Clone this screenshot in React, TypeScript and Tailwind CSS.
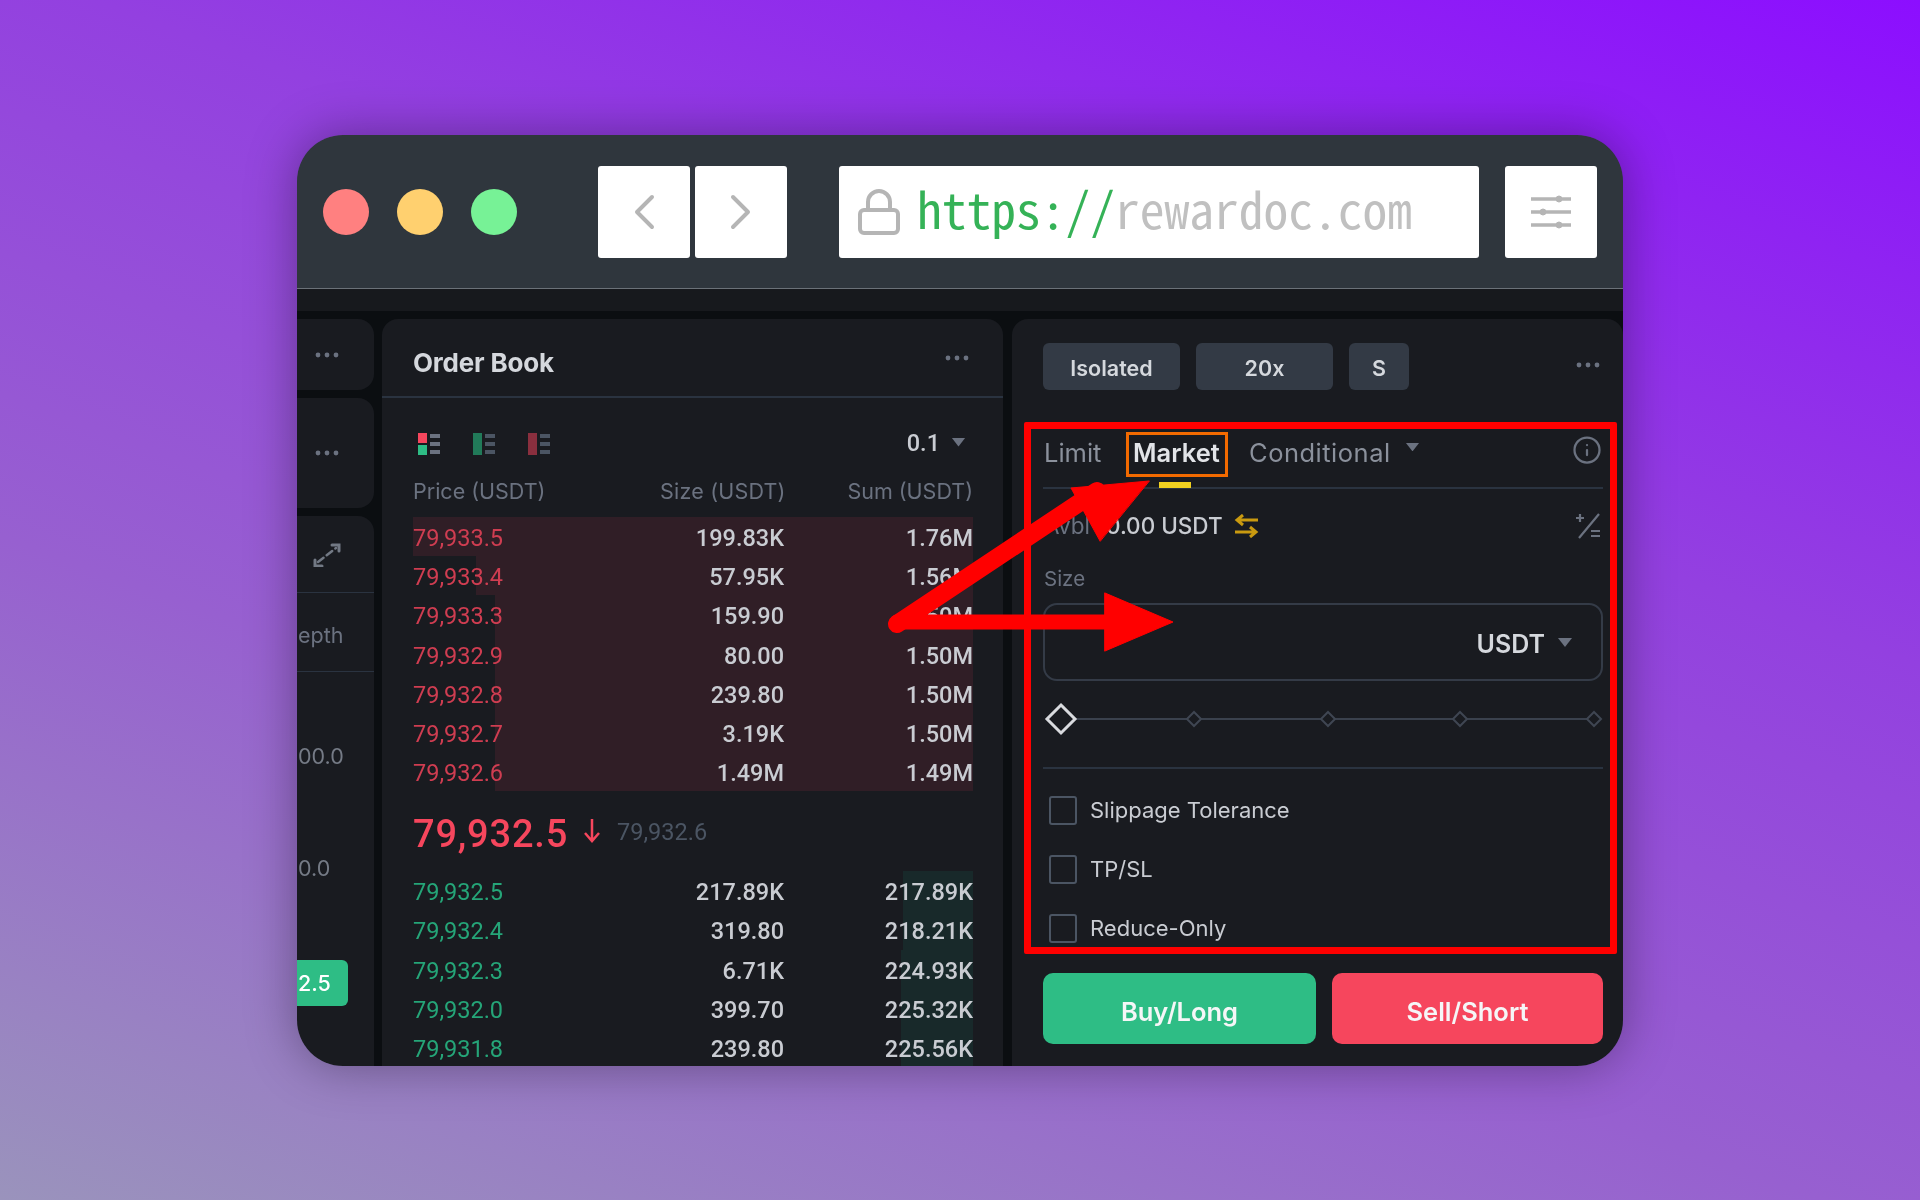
import { Info } from 'lucide-react';

const asks = [
  { price: '79,933.5', size: '199.83K', sum: '1.76M', bar: 'w-[560px]' },
  { price: '79,933.4', size: '57.95K', sum: '1.56M', bar: 'w-[497px]' },
  { price: '79,933.3', size: '159.90', sum: '1.50M', bar: 'w-[478px]' },
  { price: '79,932.9', size: '80.00', sum: '1.50M', bar: 'w-[478px]' },
  { price: '79,932.8', size: '239.80', sum: '1.50M', bar: 'w-[478px]' },
  { price: '79,932.7', size: '3.19K', sum: '1.50M', bar: 'w-[478px]' },
  { price: '79,932.6', size: '1.49M', sum: '1.49M', bar: 'w-[478px]' },
];

const bids = [
  { price: '79,932.5', size: '217.89K', sum: '217.89K', bar: 'w-[70px]' },
  { price: '79,932.4', size: '319.80', sum: '218.21K', bar: 'w-[70px]' },
  { price: '79,932.3', size: '6.71K', sum: '224.93K', bar: 'w-[72px]' },
  { price: '79,932.0', size: '399.70', sum: '225.32K', bar: 'w-[72px]' },
  { price: '79,931.8', size: '239.80', sum: '225.56K', bar: 'w-[72px]' },
];

function Dots() {
  return (
    <svg width="24" height="6" viewBox="0 0 24 6" fill="#6b7280">
      <circle cx="3" cy="3" r="2.4" />
      <circle cx="12" cy="3" r="2.4" />
      <circle cx="21" cy="3" r="2.4" />
    </svg>
  );
}

function Caret({ className }: { className: string }) {
  return (
    <svg className={className} viewBox="0 0 16 10" fill="#6b7280">
      <path d="M1 1h14l-7 9z" />
    </svg>
  );
}

function BookIcon({ top, bottom, bars }: { top: string; bottom: string; bars: string }) {
  return (
    <svg width="24" height="24" viewBox="0 0 24 24">
      {top === bottom ? (
        <rect x="1" y="1" width="9" height="22" fill={top} />
      ) : (
        <>
          <rect x="1" y="1" width="9" height="10" fill={top} />
          <rect x="1" y="13" width="9" height="10" fill={bottom} />
        </>
      )}
      <rect x="13" y="2" width="10" height="4" fill={bars} />
      <rect x="13" y="10" width="10" height="4" fill={bars} />
      <rect x="13" y="18" width="10" height="4" fill={bars} />
    </svg>
  );
}

function Row({ price, size, sum, bar, side }: { price: string; size: string; sum: string; bar: string; side: 'ask' | 'bid' }) {
  return (
    <div className="relative flex h-[39.2px] items-center font-['Roboto',sans-serif] text-[23.5px] font-medium text-[#c9ccd2]">
      <div className={`absolute inset-y-0 right-0 ${bar} ${side === 'ask' ? 'bg-[#301e26]' : 'bg-[#18292a]'}`} />
      <span className={`relative w-[190px] pt-[4px] font-normal ${side === 'ask' ? 'text-[#cf3d51]' : 'text-[#25a578]'}`}>{price}</span>
      <span className="relative w-[181px] pt-[4px] text-right">{size}</span>
      <span className="relative w-[189px] pt-[4px] text-right">{sum}</span>
    </div>
  );
}

function Check({ label }: { label: string }) {
  return (
    <div className="flex h-[30px] items-center pl-[6px]">
      <div className="h-[29px] w-[28px] rounded-[3px] border-2 border-[#4b5563]" />
      <span className="ml-[13px] text-[22px] text-[#c9ccd2]">{label}</span>
    </div>
  );
}

function Pill({ label, width }: { label: string; width: string }) {
  return (
    <div className={`flex h-[47px] ${width} items-center justify-center rounded-[6px] bg-[#333a45] pt-[3px] text-[21.5px] font-semibold text-[#d5d8dd]`}>
      {label}
    </div>
  );
}

export default function App() {
  return (
    <div className="h-[1200px] w-[1920px] overflow-hidden bg-[linear-gradient(200deg,#8c0eff_0%,#9340e0_35%,#9760d0_65%,#9a93bc_100%)] pl-[297px] pt-[135px] font-['Inter',sans-serif]">
      <div className="relative flex h-[931px] w-[1326px] flex-col overflow-hidden rounded-[46px] shadow-[0_0_50px_rgba(0,0,0,0.35)]">
        {/* Browser bar */}
        <div className="flex h-[154px] shrink-0 items-center border-b border-[#6b7178] bg-[#2f363d] pl-[26px]">
          <div className="h-[46px] w-[46px] rounded-full bg-[#ff8080]" />
          <div className="ml-[28px] h-[46px] w-[46px] rounded-full bg-[#ffd06f]" />
          <div className="ml-[28px] h-[46px] w-[46px] rounded-full bg-[#77f296]" />
          <div className="ml-[81px] flex h-[92px] w-[92px] items-center justify-center rounded-[3px] bg-white">
            <svg width="24" height="36" viewBox="0 0 24 36" fill="none" stroke="#b5b5b5" strokeWidth="4" strokeLinecap="round" strokeLinejoin="round">
              <path d="M20 3L5 18l15 15" />
            </svg>
          </div>
          <div className="ml-[5px] flex h-[92px] w-[92px] items-center justify-center rounded-[3px] bg-white">
            <svg width="24" height="36" viewBox="0 0 24 36" fill="none" stroke="#b5b5b5" strokeWidth="4" strokeLinecap="round" strokeLinejoin="round">
              <path d="M4 3l15 15L4 33" />
            </svg>
          </div>
          <div className="ml-[52px] flex h-[92px] w-[640px] items-center rounded-[3px] bg-white pl-[19px]">
            <svg width="42" height="46" viewBox="0 0 42 46" fill="none" stroke="#b5b5b5" strokeWidth="4">
              <rect x="2" y="21" width="38" height="23" rx="4" />
              <path d="M10 21v-8a11 11 0 0 1 22 0v8" />
            </svg>
            <div className="mb-[7px] ml-[17px] font-['Noto_Sans_Mono_CJK_SC','Liberation_Mono',monospace] text-[49.5px] leading-none">
              <span className="text-[#35b257]">https://</span>
              <span className="text-[#c0c0c0]">rewardoc.com</span>
            </div>
          </div>
          <div className="ml-[26px] flex h-[92px] w-[92px] items-center justify-center rounded-[3px] bg-white">
            <svg width="40" height="36" viewBox="0 0 40 36" fill="#b5b5b5" stroke="#b5b5b5">
              <path d="M0 5h40M0 18h40M0 31h40" strokeWidth="3.5" />
              <circle cx="28" cy="5" r="3" />
              <circle cx="12" cy="18" r="3" />
              <circle cx="28" cy="31" r="3" />
            </svg>
          </div>
        </div>

        {/* Exchange content */}
        <div className="flex min-h-0 flex-1 flex-col bg-[#0b0e11] blur-[0.7px]">
          <div className="h-[22px] shrink-0 bg-[#17191d]" />
          <div className="flex min-h-0 flex-1 gap-[8px] pt-[8px]">
            {/* Left column, cut off by the window */}
            <div className="flex w-[77px] shrink-0 flex-col gap-[8px]">
              <div className="flex h-[71px] shrink-0 justify-end rounded-tr-[16px] rounded-br-[16px] bg-[#191b20] pr-[35px] pt-[33px]">
                <Dots />
              </div>
              <div className="flex h-[110px] shrink-0 justify-end rounded-tr-[16px] rounded-br-[16px] bg-[#191b20] pr-[35px] pt-[52px]">
                <Dots />
              </div>
              <div className="flex min-h-0 flex-1 flex-col rounded-tr-[16px] bg-[#191b20] text-[21.5px] text-[#6b7280]">
                <div className="flex h-[77px] items-start justify-end border-b border-[#2a3340] pr-[33px] pt-[27px]">
                  <svg width="28" height="24" viewBox="0 0 28 24" fill="none" stroke="#727984" strokeWidth="2.5" strokeLinecap="round">
                    <path d="M5 19L23 5" strokeDasharray="7 4" />
                    <path d="M2 17v6h7" strokeWidth="3" />
                    <path d="M19 2h7v6" strokeWidth="3" />
                  </svg>
                </div>
                <div className="flex h-[79px] items-center border-b border-[#2a3340] pl-[1px] pt-[6px]">epth</div>
                <div className="mt-[64px] h-[40px] pl-[1px] leading-[40px] text-[#757b86]">00.0</div>
                <div className="mt-[72px] h-[40px] pl-[1px] leading-[40px] text-[#757b86]">0.0</div>
                <div className="mt-[72px] flex h-[46px] w-[51px] items-center rounded-r-[6px] bg-[#2ebd85] pl-[1px] font-medium text-white">2.5</div>
              </div>
            </div>

            {/* Order book */}
            <div className="w-[621px] shrink-0 overflow-hidden rounded-t-[16px] bg-[#191b20]">
              <div className="flex h-[79px] items-center justify-between border-b-2 border-[#2a3340] pl-[31px] pr-[34px]">
                <span className="pt-[9px] text-[26px] font-bold tracking-[-0.2px] text-[#d5d8dd]">Order Book</span>
                <Dots />
              </div>
              <div className="flex h-[119px] flex-col pl-[31px] pr-[30px]">
                <div className="mt-[34px] flex h-[24px] items-center pl-[4px]">
                  <BookIcon top="#f6465d" bottom="#2ebd85" bars="#6b7280" />
                  <div className="ml-[31px]"><BookIcon top="#217a59" bottom="#217a59" bars="#4b5563" /></div>
                  <div className="ml-[31px]"><BookIcon top="#8a2f3e" bottom="#8a2f3e" bars="#4b5563" /></div>
                  <span className="ml-auto font-['Roboto',sans-serif] text-[23.5px] font-medium text-[#c9ccd2]">0.1</span>
                  <Caret className="mb-[4px] ml-[11px] mr-[7px] w-[15px]" />
                </div>
                <div className="mt-[19px] flex items-center text-[21.5px] text-[#6b7280]">
                  <span className="w-[247px]">Price (USDT)</span>
                  <span className="tracking-[0.2px]">Size (USDT)</span>
                  <span className="ml-auto">Sum (USDT)</span>
                </div>
              </div>
              <div className="pl-[31px] pr-[30px]">
                {asks.map((r) => (
                  <Row key={r.price} {...r} side="ask" />
                ))}
              </div>
              <div className="flex h-[80px] items-center pl-[31px] pt-[7px]">
                <span className="font-['Roboto',sans-serif] text-[38px] font-medium tracking-[0.8px] text-[#f6465d]">79,932.5</span>
                <svg className="mb-[8px] ml-[15px]" width="18" height="24" viewBox="0 0 18 24" fill="none" stroke="#f6465d" strokeWidth="2.5">
                  <path d="M9 0v22M2 14l7 8 7-8" />
                </svg>
                <span className="mb-[4px] ml-[16px] font-['Roboto',sans-serif] text-[23.5px] text-[#4b5563]">79,932.6</span>
              </div>
              <div className="pl-[31px] pr-[30px]">
                {bids.map((r) => (
                  <Row key={r.price} {...r} side="bid" />
                ))}
              </div>
            </div>

            {/* Order form */}
            <div className="ml-[1px] flex-1 rounded-t-[16px] bg-[#191b20] pl-[31px] pr-[20px] pt-[24px]">
              <div className="flex gap-[16px]">
                <Pill label="Isolated" width="w-[137px]" />
                <Pill label="20x" width="w-[137px]" />
                <Pill label="S" width="w-[60px]" />
                <div className="ml-auto mr-[3px] pt-[19px]">
                  <Dots />
                </div>
              </div>
              <div className="relative mt-[32px] flex h-[67px] items-start border-b-2 border-[#2a3340] pl-[1px] pt-[12px] text-[25.5px] text-[#8b919c]">
                <span className="w-[89px]">Limit</span>
                <span className="w-[116px] font-semibold text-[#e2e4e8]">Market</span>
                <span className="w-[156px] tracking-[0.5px]">Conditional</span>
                <Caret className="mt-[8px] w-[15px]" />
                <Info className="absolute right-[1px] top-[13px] text-[#6b7280]" size={30} strokeWidth={1.8} />
                <div className="absolute bottom-[-1px] left-[116px] h-[6px] w-[32px] bg-[#f0d020]" />
              </div>
              <div className="flex h-[74px] items-center pl-[1px] text-[22.5px]">
                <span className="text-[#6b7280]">Avbl</span>
                <span className="ml-[16px] font-medium text-[#c9ccd2]">0.00 USDT</span>
                <svg className="ml-[11px]" width="25" height="24" viewBox="0 0 25 24" fill="none" stroke="#c99a10" strokeWidth="3">
                  <path d="M24 6H3M9 1L3 6l6 5M1 18h21M16 13l6 5-6 5" />
                </svg>
                <svg className="ml-auto mr-[3px]" width="25" height="26" viewBox="0 0 25 26" fill="none" stroke="#6b7280" strokeWidth="2.2">
                  <path d="M24 1L4 25M1 5h8M5 1v8M16 18h9M16 23h9" />
                </svg>
              </div>
              <div className="mt-[4px] pl-[1px] text-[20.5px] leading-[24px] text-[#6b7280]">Size</div>
              <div className="mt-[12px] flex h-[78px] items-center justify-end rounded-[14px] border-2 border-[#343b47] pr-[28px] pt-[6px]">
                <span className="text-[25px] font-semibold text-[#d5d8dd]">USDT</span>
                <Caret className="mb-[7px] ml-[12px] w-[16px]" />
              </div>
              <svg className="mt-[21px]" width="560" height="34" viewBox="0 0 560 34" fill="none">
                <path d="M32 17h512" stroke="#3a414d" strokeWidth="2" />
                <path d="M18 3L32 17 18 31 4 17z" stroke="#d9dbdf" strokeWidth="3" fill="#191b20" />
                <path d="M151 10l7 7-7 7-7-7z" stroke="#3f4652" strokeWidth="2" fill="#191b20" />
                <path d="M285 10l7 7-7 7-7-7z" stroke="#3f4652" strokeWidth="2" fill="#191b20" />
                <path d="M417 10l7 7-7 7-7-7z" stroke="#3f4652" strokeWidth="2" fill="#191b20" />
                <path d="M551 10l7 7-7 7-7-7z" stroke="#3f4652" strokeWidth="2" fill="#191b20" />
              </svg>
              <div className="mt-[31px] h-[2px] bg-[#2a3340]" />
              <div className="mt-[26px] flex flex-col gap-[29px]">
                <Check label="Slippage Tolerance" />
                <Check label="TP/SL" />
                <Check label="Reduce-Only" />
              </div>
              <div className="mt-[30px] flex gap-[16px] text-[25.5px] font-semibold text-[#f5f6f7]">
                <div className="flex h-[71px] w-[273px] items-center justify-center rounded-[10px] bg-[#2ebd85] pt-[8px]">Buy/Long</div>
                <div className="flex h-[71px] w-[271px] items-center justify-center rounded-[10px] bg-[#f6465d] pt-[8px]">Sell/Short</div>
              </div>
            </div>
          </div>
        </div>

        {/* Annotations drawn over the screenshot */}
        <div className="absolute left-[727px] top-[287px] h-[532px] w-[593px] rounded-[2px] border-[7px] border-[#ff0000]" />
        <div className="absolute left-[829px] top-[297px] h-[45px] w-[102px] border-[3px] border-[#f26a00]" />
        <svg className="absolute left-0 top-0" width="1326" height="931" viewBox="0 0 1326 931" fill="#ff0000" stroke="#ff0000" strokeLinecap="round">
          <path d="M600 489L800 356" strokeWidth="18" fill="none" />
          <path d="M600 487H815" strokeWidth="15" fill="none" />
          <path d="M852 346L774 353L803 406Z" strokeWidth="1" />
          <path d="M808 458L876 487L808 516Z" strokeWidth="1" />
        </svg>
      </div>
    </div>
  );
}
